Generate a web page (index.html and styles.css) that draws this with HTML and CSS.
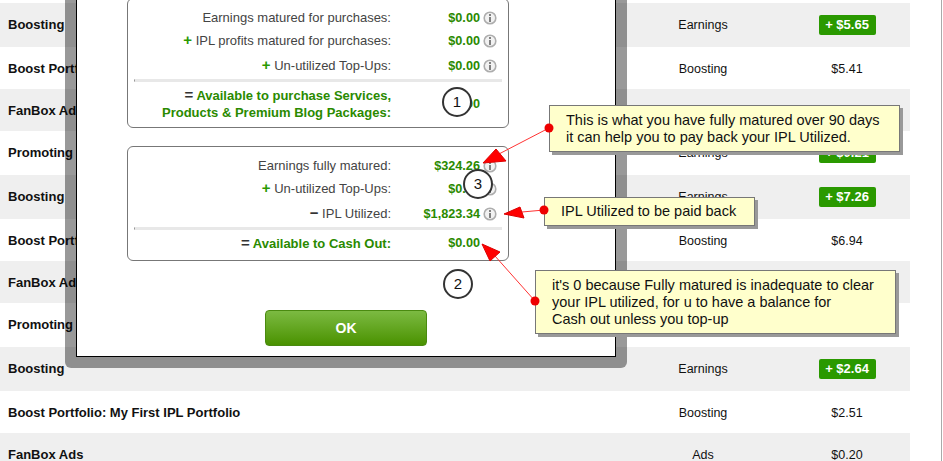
FILE: index.html
```html
<!DOCTYPE html>
<html lang="en">
<head>
    <meta charset="UTF-8">
    <meta name="viewport" content="width=device-width, initial-scale=1.0">
    <title>Transactions</title>
    <link rel="stylesheet" href="styles.css">
</head>
<body>

    <!-- Transaction list behind the popup -->
    <div class="list">
        <div class="row tall"><b>Boosting</b><span>Earnings</span><span class="price"><em class="badge">+ $5.65</em></span></div>
        <div class="row"><b>Boost Portfolio: My First IPL Portfolio</b><span>Boosting</span><span class="price">$5.41</span></div>
        <div class="row"><b>FanBox Ads</b><span></span><span class="price"></span></div>
        <div class="row tall"><b>Promoting</b><span>Earnings</span><span class="price"><em class="badge">+ $0.21</em></span></div>
        <div class="row tall"><b>Boosting</b><span>Earnings</span><span class="price"><em class="badge">+ $7.26</em></span></div>
        <div class="row"><b>Boost Portfolio: My First IPL Portfolio</b><span>Boosting</span><span class="price">$6.94</span></div>
        <div class="row"><b>FanBox Ads</b><span></span><span class="price"></span></div>
        <div class="row tall"><b>Promoting</b><span></span><span class="price"><em class="badge"></em></span></div>
        <div class="row tall"><b>Boosting</b><span>Earnings</span><span class="price"><em class="badge">+ $2.64</em></span></div>
        <div class="row"><b>Boost Portfolio: My First IPL Portfolio</b><span>Boosting</span><span class="price">$2.51</span></div>
        <div class="row"><b>FanBox Ads</b><span>Ads</span><span class="price">$0.20</span></div>
    </div>

    <!-- Popup -->
    <div class="popup-frame">
        <div class="popup">
            <div class="card">
                <div class="line"><span class="label">Earnings matured for purchases:</span><span class="amount">$0.00</span><svg class="info" viewBox="0 0 14 14"><use href="#info"/></svg></div>
                <div class="line"><span class="label"><i class="plus">+</i> IPL profits matured for purchases:</span><span class="amount">$0.00</span><svg class="info" viewBox="0 0 14 14"><use href="#info"/></svg></div>
                <div class="line third"><span class="label"><i class="plus">+</i> Un-utilized Top-Ups:</span><span class="amount">$0.00</span><svg class="info" viewBox="0 0 14 14"><use href="#info"/></svg></div>
                <div class="divider"></div>
                <div class="line total wrapped"><span class="label"><i class="sign">=</i> Available to purchase Services,<br>Products &amp; Premium Blog Packages:</span><span class="amount">$0.00</span></div>
            </div>
            <div class="card">
                <div class="line"><span class="label">Earnings fully matured:</span><span class="amount">$324.26</span><svg class="info" viewBox="0 0 14 14"><use href="#info"/></svg></div>
                <div class="line"><span class="label"><i class="plus">+</i> Un-utilized Top-Ups:</span><span class="amount">$0.00</span><svg class="info" viewBox="0 0 14 14"><use href="#info"/></svg></div>
                <div class="line third"><span class="label"><i class="sign">&minus;</i> IPL Utilized:</span><span class="amount">$1,823.34</span><svg class="info" viewBox="0 0 14 14"><use href="#info"/></svg></div>
                <div class="divider"></div>
                <div class="line total"><span class="label"><i class="sign">=</i> Available to Cash Out:</span><span class="amount">$0.00</span></div>
            </div>
            <button class="ok-button">OK</button>
        </div>
    </div>

    <!-- Annotations drawn on top of the screenshot -->
    <svg class="arrows" width="943" height="461">
        <defs>
            <symbol id="info" viewBox="0 0 14 14">
                <circle cx="7" cy="7" r="5.8" fill="#f2f2f2" stroke="#adadad" stroke-width="1.6"/>
                <rect x="6" y="3" width="2" height="2" fill="#808080"/>
                <rect x="6" y="6" width="2" height="5" fill="#808080"/>
            </symbol>
        </defs>
        <line x1="549" y1="128" x2="497" y2="155" stroke="#f33"/>
        <polygon points="483,163 496,149 506,161" fill="#f00" stroke="#d00"/>
        <circle cx="549" cy="128" r="4.5" fill="#e00"/>
        <line x1="544" y1="210" x2="522" y2="212" stroke="#f33"/>
        <polygon points="504,214 520,207 524,218" fill="#f00" stroke="#d00"/>
        <circle cx="544" cy="210" r="4.5" fill="#e00"/>
        <line x1="535" y1="301" x2="495" y2="256" stroke="#f33"/>
        <polygon points="482,244 500,252 490,261" fill="#f00" stroke="#d00"/>
        <circle cx="535" cy="301" r="4.5" fill="#e00"/>
    </svg>

    <div class="step step-1">1</div>
    <div class="step step-2">2</div>
    <div class="step step-3">3</div>

    <div class="note note-1">This is what you have fully matured over 90 days<br>it can help you to pay back your IPL Utilized.</div>
    <div class="note note-2">IPL Utilized to be paid back</div>
    <div class="note note-3">it's 0 because Fully matured is inadequate to clear<br>your IPL utilized, for u to have a balance for<br>Cash out unless you top-up</div>

</body>
</html>
```

FILE: styles.css
```css
html, body {
    height: 100%;
    overflow: hidden;
}
body {
    font-family: "Liberation Sans", Arial, sans-serif;
    font-size: 12.5px;
    margin: 0 1px 0 0;
    padding: 3px 0 0;
    box-sizing: border-box;
    background-color: white;
    color: #111;
    border-right: 1px solid #aaa;
    position: relative;
}

/* List */
.list {
    width: 910px;
}
.row {
    display: grid;
    grid-template-columns: 642px 122px 1fr;
    box-sizing: border-box;
    height: 42px;
    padding-top: 1px;
    align-items: center;
    text-align: center;
}
.row.tall {
    height: 44px;
    padding-top: 0;
}
.row:nth-child(4n+1), .row:nth-child(4n+3) {
    background-color: #efefef;
}
.row b {
    text-align: left;
    padding-left: 8px;
    font-size: 13px;
}
.row.tall b {
    padding-bottom: 2px;
}
.price {
    padding-left: 20px;
}
.badge {
    display: inline-block;
    width: 57px;
    height: 20px;
    line-height: 20px;
    vertical-align: middle;
    background-color: #2a9900;
    border-radius: 2px;
    color: white;
    font-style: normal;
    font-weight: bold;
    font-size: 13px;
}

/* Popup */
.popup-frame {
    position: absolute;
    left: 65px;
    top: -20px;
    width: 540px;
    padding: 11px;
    background-color: rgba(0, 0, 0, 0.4);
    border-radius: 6px;
}
.popup {
    background-color: white;
    border: 1px solid black;
    padding: 6px 0 10px;
    display: flex;
    flex-direction: column;
    align-items: center;
}
.card {
    align-self: flex-start;
    width: 368px;
    margin-left: 50px;
    padding: 7px 6px 6px;
    border: 1px solid #777;
    border-radius: 6px;
    margin-bottom: 18px;
    color: #444;
    font-size: 13px;
}
.card:last-of-type {
    margin-bottom: 49px;
}
.line {
    display: flex;
    align-items: center;
    height: 23px;
}
.line.third {
    margin-top: 2px;
}
.label {
    width: 257px;
    text-align: right;
}
.amount {
    width: 89px;
    text-align: right;
    color: #2a8a00;
    font-weight: bold;
    font-size: 12.7px;
}
.info {
    width: 14px;
    height: 14px;
    margin-left: 3px;
}
.plus, .sign {
    font-style: normal;
    font-weight: bold;
    font-size: 15px;
    line-height: 0;
}
.plus {
    color: #2a9900;
}
.sign {
    color: #333;
}
.divider {
    height: 1px;
    margin: 2px 0 4px;
    background-color: #e8e8e8;
    border: 1px solid #e8e8e8;
    border-left-color: #999;
}
.line.total {
    height: auto;
    min-height: 18px;
    margin-bottom: 2px;
    line-height: 17px;
    color: #2a8a00;
    font-weight: bold;
}
.line.wrapped {
    padding-top: 1px;
    margin-bottom: 0;
}
.ok-button {
    width: 162px;
    height: 36px;
    border: 1px solid #4a8a10;
    border-radius: 4px;
    background: linear-gradient(#7cba42, #4a9200);
    color: #fff;
    font-family: inherit;
    font-size: 14px;
    font-weight: bold;
}

/* Annotations */
.arrows {
    position: absolute;
    left: 0;
    top: 0;
    z-index: 2;
}
.step {
    position: absolute;
    width: 26px;
    height: 26px;
    line-height: 26px;
    border: 2px solid #333;
    border-radius: 50%;
    background-color: white;
    text-align: center;
    font-size: 15px;
    color: #111;
    z-index: 3;
}
.step-1 { left: 442px; top: 87px; }
.step-2 { left: 443px; top: 269px; }
.step-3 { left: 463px; top: 169px; }
.note {
    position: absolute;
    box-sizing: border-box;
    padding-left: 16px;
    border: 1px solid #777;
    background-color: #ffc;
    box-shadow: 3px 3px 0 #999;
    font-size: 14.5px;
    line-height: 17px;
    color: #111;
    z-index: 1;
}
.note-1 { left: 549px; top: 105px; width: 351px; height: 47px; padding-top: 6px; }
.note-2 { left: 544px; top: 197px; width: 211px; height: 29px; padding-top: 5px; }
.note-3 { left: 535px; top: 270px; width: 361px; height: 64px; padding-top: 6px; }
```
